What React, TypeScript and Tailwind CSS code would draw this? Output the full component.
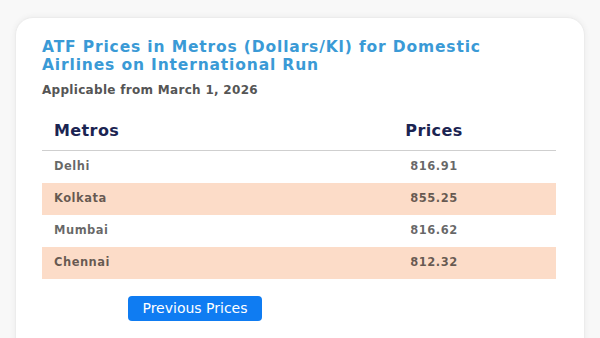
import React from "react";

const rows = [
  { city: "Delhi", price: "816.91", shaded: false },
  { city: "Kolkata", price: "855.25", shaded: true },
  { city: "Mumbai", price: "816.62", shaded: false },
  { city: "Chennai", price: "812.32", shaded: true },
];

export default function App() {
  return (
    <div className="w-[600px] h-[338px] overflow-hidden bg-[#f8f8f8] pt-[17px] px-[15px] font-['DejaVu_Sans',sans-serif]">
      <div className="h-[360px] bg-white rounded-[18px] border border-[#ececec] shadow-[0_0_6px_rgba(0,0,0,0.06)] px-[26px] pt-[20px]">
        <h1 className="text-[15.5px] leading-[18px] font-bold tracking-[0.85px] text-[#3a9ad6]">
          ATF Prices in Metros (Dollars/Kl) for Domestic
          <br />
          Airlines on International Run
        </h1>
        <p className="mt-[8px] text-[12px] leading-[16px] font-bold tracking-[0.3px] text-[#555]">
          Applicable from March 1, 2026
        </p>
        <div className="mt-[13px] w-[514px]">
          <div className="grid grid-cols-[270px_1fr] pt-[10px] pb-[9px] border-b border-[#cfcfcf] text-[16px] leading-[20px] font-bold tracking-[0.4px] text-[#1b2452]">
            <div className="pl-[12px]">Metros</div>
            <div className="text-center">Prices</div>
          </div>
          {rows.map((r) => (
            <div
              key={r.city}
              className={`grid grid-cols-[270px_1fr] h-[32px] items-center text-[11.5px] font-bold tracking-[0.5px] text-black/60 ${
                r.shaded ? "bg-[#fcdcc8]" : "bg-white"
              }`}
            >
              <div className="pl-[12px]">{r.city}</div>
              <div className="text-center">{r.price}</div>
            </div>
          ))}
        </div>
        <button className="mt-[17px] ml-[86px] w-[134px] h-[25px] rounded-[4px] bg-[#0f7cf2] text-white text-[14px] leading-[25px] flex items-center justify-center">
          Previous Prices
        </button>
      </div>
    </div>
  );
}
